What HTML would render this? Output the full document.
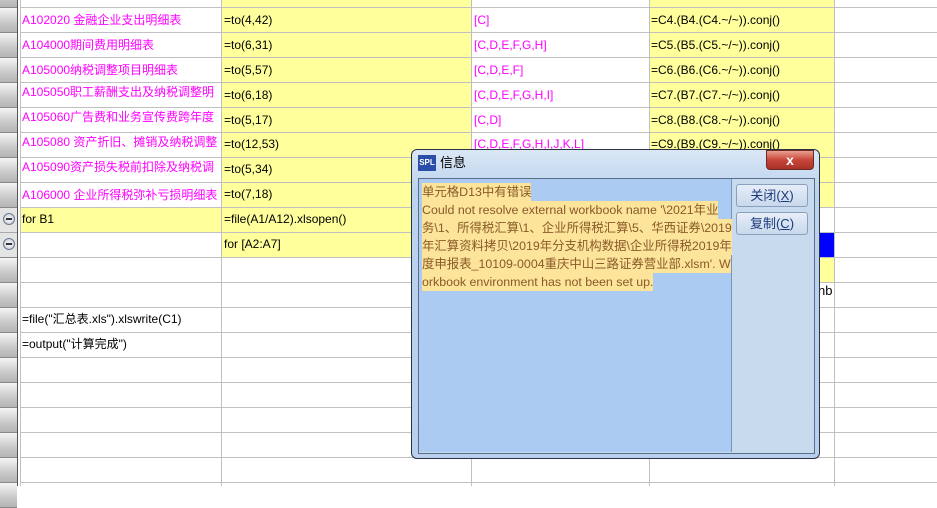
<!DOCTYPE html>
<html><head><meta charset="utf-8"><style>
body{margin:0;width:937px;height:486px;overflow:hidden;background:#fff;position:relative;font-family:"Liberation Sans","Noto Sans CJK SC",sans-serif;font-size:12px}
.a{position:absolute}
.hl{position:absolute;left:0;width:17px;height:24px;background:linear-gradient(#f4f4f4,#c9c9c9 60%,#b5b5b5);border-bottom:1px solid #888}
.vl{position:absolute;top:0;width:1px;height:486px;background:#c0c0c0}
.hz{position:absolute;left:20px;width:917px;height:1px;background:#c0c0c0}
.t{position:absolute;white-space:nowrap;font-size:12px;line-height:14px}
.m{color:#ff00ff}
.y{position:absolute;background:#ffff9c}
.mn{position:absolute;left:3px;width:10px;height:10px;border-radius:50%;border:1px solid #6b7a8c;background:radial-gradient(#fff,#b8c4d2);}
.mn:after{content:"";position:absolute;left:2px;top:4px;width:6px;height:2px;background:#333}
.ln{position:absolute;left:0;white-space:nowrap;background:#fce49a;color:#8a5a28;font-size:12.4px;line-height:18px}
.btn{position:absolute;left:736px;width:70px;height:21px;border:1px solid #8aa0bf;border-radius:3px;background:linear-gradient(#e6eef8,#c9d8ec);color:#1c3a7a;font-size:13px;text-align:center;line-height:21px}
</style></head><body>
<div class="a" style="left:0;top:0;width:17px;height:486px;background:#c4c4c4"></div>
<div class="a" style="left:17px;top:0;width:1px;height:486px;background:#555"></div>
<!-- yellow fills -->
<div class="y" style="left:222px;top:0;width:249px;height:257px"></div>
<div class="y" style="left:650px;top:0;width:184px;height:207px"></div>
<div class="y" style="left:20px;top:208px;width:201px;height:24px"></div>
<div class="y" style="left:650px;top:258px;width:184px;height:24px"></div>
<div class="a" style="left:650px;top:233px;width:184px;height:24px;background:#0000ff"></div>
<!-- grid -->
<div class="vl" style="left:20px"></div><div class="vl" style="left:221px"></div><div class="vl" style="left:471px"></div><div class="vl" style="left:649px"></div><div class="vl" style="left:834px"></div>
<div class="hz" style="top:7px"></div><div class="hz" style="top:32px"></div><div class="hz" style="top:57px"></div><div class="hz" style="top:82px"></div><div class="hz" style="top:107px"></div><div class="hz" style="top:132px"></div><div class="hz" style="top:157px"></div><div class="hz" style="top:182px"></div><div class="hz" style="top:207px"></div><div class="hz" style="top:232px"></div><div class="hz" style="top:257px"></div><div class="hz" style="top:282px"></div><div class="hz" style="top:307px"></div><div class="hz" style="top:332px"></div><div class="hz" style="top:357px"></div><div class="hz" style="top:382px"></div><div class="hz" style="top:407px"></div><div class="hz" style="top:432px"></div><div class="hz" style="top:457px"></div><div class="hz" style="top:482px"></div>
<!-- row headers -->
<div class="hl" style="top:-17px"></div><div class="hl" style="top:8px"></div><div class="hl" style="top:33px"></div><div class="hl" style="top:58px"></div><div class="hl" style="top:83px"></div><div class="hl" style="top:108px"></div><div class="hl" style="top:133px"></div><div class="hl" style="top:158px"></div><div class="hl" style="top:183px"></div>
<div class="a" style="left:0;top:208px;width:17px;height:49px;background:#e4e4e4;border-bottom:1px solid #888"></div>
<div class="a" style="left:0;top:232px;width:17px;height:1px;background:#aaa"></div>
<div class="mn" style="top:213px"></div><div class="mn" style="top:238px"></div>
<div class="hl" style="top:258px"></div><div class="hl" style="top:283px"></div><div class="hl" style="top:308px"></div><div class="hl" style="top:333px"></div><div class="hl" style="top:358px"></div><div class="hl" style="top:383px"></div><div class="hl" style="top:408px"></div><div class="hl" style="top:433px"></div><div class="hl" style="top:458px"></div><div class="hl" style="top:483px"></div>
<!-- texts -->
<div class="t m" style="left:22px;top:13px">A102020 金融企业支出明细表</div>
<div class="t m" style="left:22px;top:38px">A104000期间费用明细表</div>
<div class="t m" style="left:22px;top:63px">A105000纳税调整项目明细表</div>
<div class="t m" style="left:22px;top:85px">A105050职工薪酬支出及纳税调整明</div>
<div class="t m" style="left:22px;top:110px">A105060广告费和业务宣传费跨年度</div>
<div class="t m" style="left:22px;top:135px">A105080 资产折旧、摊销及纳税调整</div>
<div class="t m" style="left:22px;top:160px">A105090资产损失税前扣除及纳税调</div>
<div class="t m" style="left:22px;top:188px">A106000 企业所得税弥补亏损明细表</div>
<div class="t" style="left:22px;top:212px">for B1</div>
<div class="t" style="left:22px;top:312px">=file("汇总表.xls").xlswrite(C1)</div>
<div class="t" style="left:22px;top:337px">=output("计算完成")</div>
<div class="t" style="left:224px;top:13px">=to(4,42)</div>
<div class="t" style="left:224px;top:38px">=to(6,31)</div>
<div class="t" style="left:224px;top:63px">=to(5,57)</div>
<div class="t" style="left:224px;top:88px">=to(6,18)</div>
<div class="t" style="left:224px;top:113px">=to(5,17)</div>
<div class="t" style="left:224px;top:137px">=to(12,53)</div>
<div class="t" style="left:224px;top:162px">=to(5,34)</div>
<div class="t" style="left:224px;top:187px">=to(7,18)</div>
<div class="t" style="left:224px;top:212px">=file(A1/A12).xlsopen()</div>
<div class="t" style="left:224px;top:237px">for [A2:A7]</div>
<div class="t m" style="left:474px;top:13px">[C]</div>
<div class="t m" style="left:474px;top:38px">[C,D,E,F,G,H]</div>
<div class="t m" style="left:474px;top:63px">[C,D,E,F]</div>
<div class="t m" style="left:474px;top:88px">[C,D,E,F,G,H,I]</div>
<div class="t m" style="left:474px;top:113px">[C,D]</div>
<div class="t m" style="left:474px;top:137px">[C,D,E,F,G,H,I,J,K,L]</div>
<div class="t" style="left:651px;top:13px">=C4.(B4.(C4.~/~)).conj()</div>
<div class="t" style="left:651px;top:38px">=C5.(B5.(C5.~/~)).conj()</div>
<div class="t" style="left:651px;top:63px">=C6.(B6.(C6.~/~)).conj()</div>
<div class="t" style="left:651px;top:88px">=C7.(B7.(C7.~/~)).conj()</div>
<div class="t" style="left:651px;top:113px">=C8.(B8.(C8.~/~)).conj()</div>
<div class="t" style="left:651px;top:137px">=C9.(B9.(C9.~/~)).conj()</div>
<div class="t" style="left:818px;top:284px;font-size:13px">nb</div>
<!-- dialog -->
<div class="a" style="left:411px;top:149px;width:407px;height:308px;border:1px solid #2a3440;border-radius:6px;background:linear-gradient(#dbe7f5,#bcd3ee 40px,#b8d0ee)"></div>
<div class="a" style="left:418px;top:155px;width:18px;height:16px;background:#2a4fa8;color:#fff;font-size:8px;font-weight:bold;line-height:16px;text-align:center">SPL</div>
<div class="t" style="left:440px;top:155px;font-size:13px;line-height:16px;color:#000">信息</div>
<div class="a" style="left:766px;top:150px;width:46px;height:18px;border:1px solid #6b2a24;border-radius:0 0 4px 4px;background:linear-gradient(#e8a090,#c8453a 50%,#a83226);color:#fff;font-weight:bold;font-size:14px;text-align:center;line-height:18px">x</div>
<div class="a" style="left:418px;top:178px;width:395px;height:274px;border:1px solid #5a6e8a;background:#c8daee"></div>
<div class="a" style="left:419px;top:179px;width:312px;height:273px;background:#abcbf3;border-right:1px solid #7a95bb"></div>
<div class="a" style="left:422px;top:183px;">
<div class="ln" style="top:0">单元格D13中有错误</div>
<div class="ln" style="top:18px">Could not resolve external workbook name '\2021年业</div>
<div class="ln" style="top:36px">务\1、所得税汇算\1、企业所得税汇算\5、华西证券\2019</div>
<div class="ln" style="top:54px">年汇算资料拷贝\2019年分支机构数据\企业所得税2019年</div>
<div class="ln" style="top:72px">度申报表_10109-0004重庆中山三路证券营业部.xlsm'. W</div>
<div class="ln" style="top:90px">orkbook environment has not been set up.</div>
</div>
<div class="btn" style="top:184px">关闭(<u>X</u>)</div>
<div class="btn" style="top:212px">复制(<u>C</u>)</div>
</body></html>
